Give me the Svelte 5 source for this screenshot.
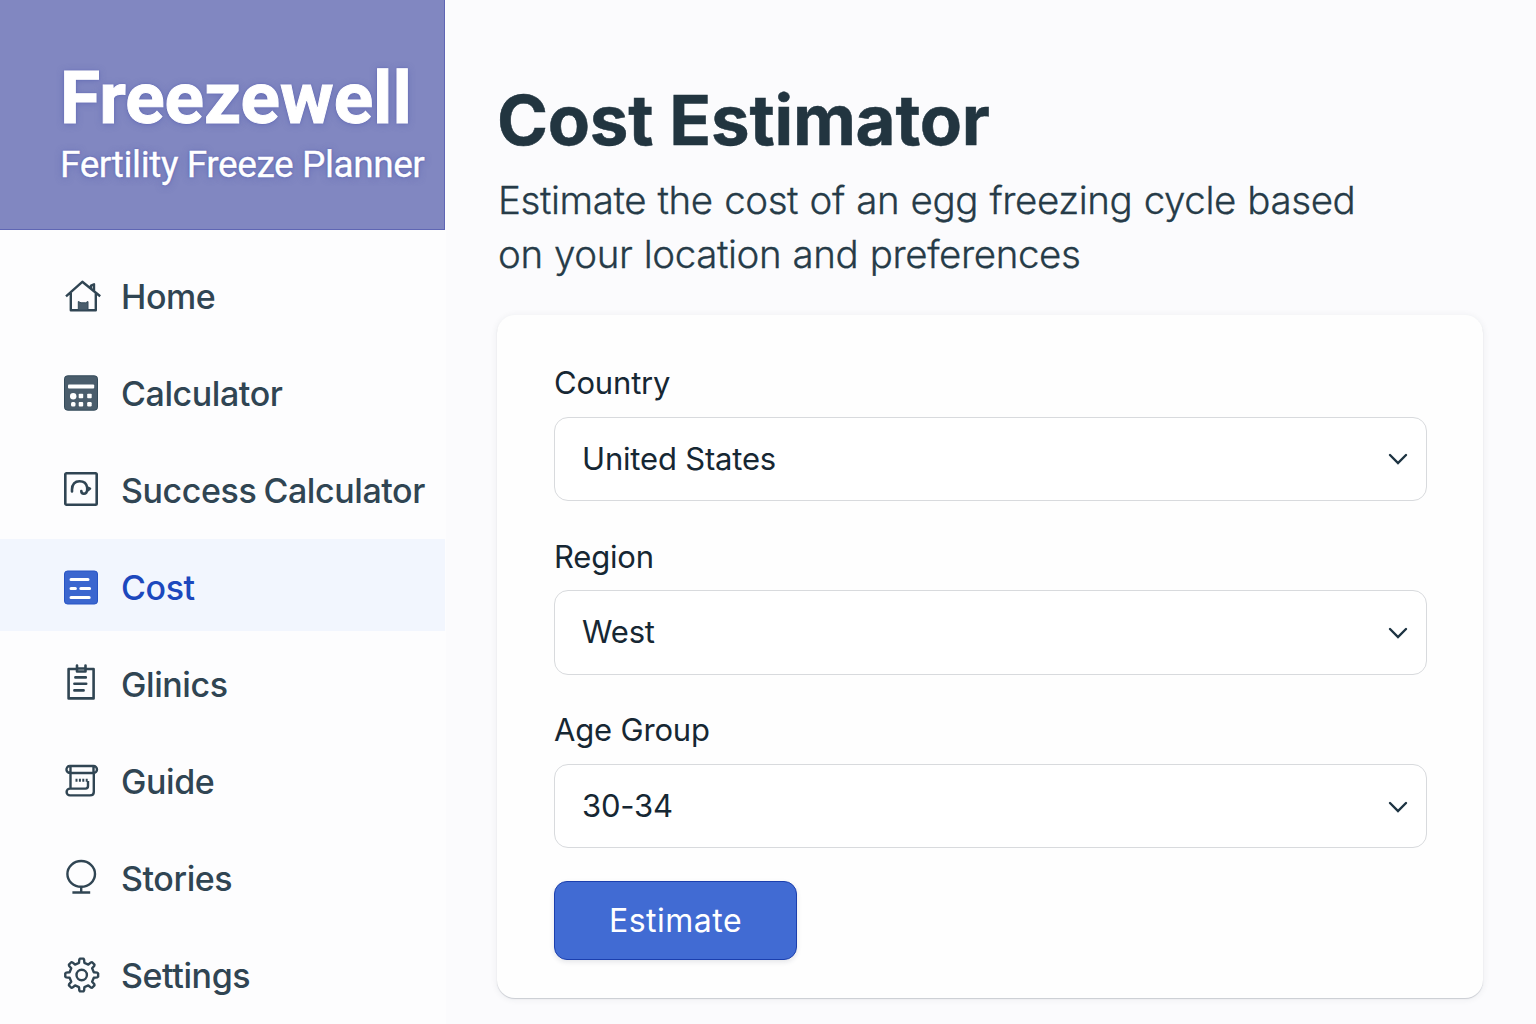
<script lang="ts">
  const navItems = [
    { id: 'home', label: 'Home' },
    { id: 'calculator', label: 'Calculator' },
    { id: 'success', label: 'Success Calculator' },
    { id: 'cost', label: 'Cost' },
    { id: 'clinics', label: 'Glinics' },
    { id: 'guide', label: 'Guide' },
    { id: 'stories', label: 'Stories' },
    { id: 'settings', label: 'Settings' }
  ];

  const fields = [
    { id: 'country', label: 'Country', value: 'United States' },
    { id: 'region', label: 'Region', value: 'West' },
    { id: 'age', label: 'Age Group', value: '30-34' }
  ];

  let active = $state('cost');

  // eight-toothed cog, centred on 0,0
  function cog(outer: number, root: number) {
    const points: string[] = [];
    for (let i = 0; i < 8; i++) {
      const mid = (i * Math.PI) / 4;
      for (const [offset, r] of [[-0.22, root], [-0.15, outer - 0.8], [-0.1, outer], [0.1, outer], [0.15, outer - 0.8], [0.22, root]]) {
        points.push(`${(r * Math.sin(mid + offset)).toFixed(2)} ${(-r * Math.cos(mid + offset)).toFixed(2)}`);
      }
    }
    return `M${points.join('L')}Z`;
  }
</script>

<div class="app">
  <aside class="sidebar">
    <header class="brand">
      <div class="name">Freezewell</div>
      <div class="tagline">Fertility Freeze Planner</div>
    </header>
    <nav>
      {#each navItems as item}
        <button class="nav-item" class:active={active === item.id} onclick={() => (active = item.id)}>
          <svg class="icon" viewBox="0 0 40 40" aria-hidden="true">
            {#if item.id === 'home'}
              <path d="M4 20.3 20.3 5.8 38.2 20.3M8.8 17V34.3H33.8V17M29 12V9.5L32 8.3V15" />
              <path class="solid" d="M16.3 34V25.5L19 26.8H23.5L26 25.5V34Z" />
            {:else if item.id === 'calculator'}
              <rect class="solid" x="2.5" y="2.8" width="33" height="34.4" rx="3" />
              <rect class="hole" x="6" y="11.5" width="26.2" height="4" rx="1" />
              <circle class="hole" cx="11.2" cy="23.2" r="3.2" />
              <rect class="hole" x="16.7" y="20.8" width="4.5" height="4.5" rx="0.8" />
              <rect class="hole" x="25.2" y="20.8" width="4.5" height="4.5" rx="0.8" />
              <rect class="hole" x="9" y="29" width="4.5" height="4.5" rx="1.5" />
              <rect class="hole" x="16.7" y="29" width="4.5" height="4.5" rx="1" />
              <rect class="hole" x="25.2" y="29" width="4.5" height="4.5" rx="1.2" />
            {:else if item.id === 'success'}
              <rect class="bold" x="3.3" y="3.3" width="31.4" height="31.4" rx="1.2" />
              <path class="bold" d="M10 21.5V19.5C10 14 13 11.2 17.5 11.2C21.5 11.2 24.6 13.6 25.2 17.5L28 18.6L25 21C24.2 24.8 19.3 24.4 19.3 21M25.2 17.5V21" />
            {:else if item.id === 'cost'}
              <rect class="solid" x="2.5" y="4" width="33" height="33" rx="3" />
              <path class="bars" d="M9 12.4H26M9 21.5H13.4M18.8 21.5H27.6M9 30.4H27.2" />
            {:else if item.id === 'clinics'}
              <path class="bold" d="M14 5H6.6V34.4H31.6V5H24.5M15 1.5V7.5H23.5V1.5M15.5 4.5H23" />
              <path class="bold" d="M13.4 13.4H23.8M12.4 19.8H24.2M12.4 26.4H21.6" />
            {:else if item.id === 'guide'}
              <path d="M7.5 5H31.5A3.4 3.4 0 0 1 31.5 12M7.5 5A3.4 3.4 0 1 0 8.5 12V27.5M8.5 5.2V12H31.5V5.2M31.8 12V31Q31.8 34.4 28 34.4H8A3.4 3.4 0 0 1 8 27.6H23.5Q26 27.6 26 25V20" />
              <path class="ticks" d="M13.5 19.3H26" />
            {:else if item.id === 'stories'}
              <ellipse cx="19.2" cy="15.9" rx="13.8" ry="12.9" />
              <path d="M19.2 28.8V34.5M10.4 34.5H28.2" />
            {:else}
              <g transform="translate(19.7 20)">
                <path d={cog(16.5, 12.4)} />
                <circle r="5.2" />
              </g>
            {/if}
          </svg>
          <span class="nav-label">{item.label}</span>
        </button>
      {/each}
    </nav>
  </aside>

  <main>
    <h1>Cost Estimator</h1>
    <p class="intro">Estimate the cost of an egg freezing cycle based<br />on your location and preferences</p>

    <section class="card">
      {#each fields as field}
        <div class="field">
          <span class="field-label">{field.label}</span>
          <button class="select" aria-label={field.label}>
            <span class="value">{field.value}</span>
            <svg class="chevron" viewBox="0 0 20 12" aria-hidden="true">
              <path d="M2 2 10 10 18 2" />
            </svg>
          </button>
        </div>
      {/each}
      <button class="submit">Estimate</button>
    </section>
  </main>
</div>

<style>
  :global(body) {
    margin: 0;
    background: #fbfbfd;
  }
  button {
    font: inherit;
    color: inherit;
    border: 0;
    border-radius: 0;
    text-align: left;
    cursor: pointer;
  }
  .app {
    display: flex;
    height: 1024px;
    overflow: hidden;
    font-family: Inter, 'Liberation Sans', sans-serif;
    color: #263b48;
  }
  .sidebar {
    width: 446px;
    flex: none;
    background: #fdfdfe;
  }
  .brand {
    box-sizing: border-box;
    width: 445px;
    height: 230px;
    padding: 54px 0 0 60px;
    background: #8187c1;
    border-right: 1px solid #5f66b4;
    border-bottom: 1px solid #5f66b4;
    color: #fff;
    font-family: Roboto, 'Liberation Sans', sans-serif;
    white-space: nowrap;
    text-shadow: 0 0 2px #4c55ac, 0 1px 7px rgba(76, 85, 172, 0.5);
  }
  .name {
    font-size: 73px;
    line-height: 88px;
    font-weight: 700;
    letter-spacing: 0;
    -webkit-text-stroke: 1px #fff;
  }
  .tagline {
    font-size: 37px;
    line-height: 46px;
    letter-spacing: -0.43px;
    -webkit-text-stroke: 0.3px #fff;
  }
  nav {
    display: flex;
    flex-direction: column;
    gap: 5px;
    padding-top: 18px;
  }
  .nav-item {
    display: flex;
    align-items: center;
    gap: 19px;
    height: 92px;
    box-sizing: border-box;
    padding: 22px 0 18px 62px;
    background: none;
    color: #304553;
    white-space: nowrap;
  }
  .nav-item.active {
    width: 445px;
    background: #f2f6fe;
    color: #1c48bd;
  }
  .nav-label {
    font-size: 34px;
    font-weight: 500;
    letter-spacing: -0.42px;
    word-spacing: -1.5px;
  }
  .icon {
    width: 40px;
    height: 40px;
    flex: none;
    fill: none;
    stroke: currentColor;
    stroke-width: 2.4;
    stroke-linejoin: round;
  }
  .icon .solid {
    fill: #4a5d6c;
    stroke: #344b5a;
    stroke-width: 1;
  }
  .active .icon .solid {
    fill: #3b66cf;
    stroke: #2854c4;
  }
  .icon .hole {
    fill: #fff;
    stroke: none;
  }
  .icon .bold {
    stroke-width: 2.6;
    stroke-linecap: round;
  }
  .icon .bars {
    stroke: #fff;
    stroke-width: 3;
    stroke-linecap: round;
  }
  .icon .ticks {
    stroke-width: 3;
    stroke-dasharray: 2 1.4;
  }
  main {
    flex: 1;
    padding: 78px 53px 0 51px;
  }
  h1 {
    margin: 0;
    color: #223540;
    font-size: 69px;
    line-height: 84px;
    font-weight: 700;
    letter-spacing: -0.25px;
    -webkit-text-stroke: 0.5px #223540;
  }
  .intro {
    margin: 11px 0 0 1px;
    font-size: 38.5px;
    line-height: 54px;
    font-weight: 300;
    letter-spacing: -0.42px;
    word-spacing: 1px;
    white-space: nowrap;
    -webkit-text-stroke: 0.3px #263b48;
  }
  .card {
    box-sizing: border-box;
    height: 683px;
    margin-top: 34px;
    padding: 45px 56px 0 57px;
    background: #fefefe;
    border-radius: 18px;
    box-shadow: 0 1px 1px #c9ccd2, 0 1px 7px rgba(40, 50, 70, 0.08);
  }
  .field {
    display: flex;
    flex-direction: column;
    height: 173.7px;
    color: #162733;
    font-size: 31px;
    letter-spacing: -0.18px;
  }
  .field-label {
    height: 56.5px;
    line-height: 45px;
  }
  .select {
    box-sizing: border-box;
    display: flex;
    align-items: center;
    justify-content: space-between;
    height: 84.5px;
    padding: 0 18px 0 27px;
    background: #fff;
    border: 1px solid #d8dadd;
    border-radius: 14px;
    letter-spacing: inherit;
  }
  .value {
    padding-bottom: 1px;
  }
  .chevron {
    width: 20px;
    height: 12px;
    margin-top: 1px;
    fill: none;
    stroke: #1d3342;
    stroke-width: 2.4;
    stroke-linecap: round;
  }
  .submit {
    box-sizing: border-box;
    width: 243px;
    height: 79px;
    background: #416bd3;
    border: 1px solid #1b3fae;
    border-radius: 13px;
    color: #fff;
    font-size: 32px;
    letter-spacing: 0.5px;
    text-align: center;
    box-shadow: 0 2px 5px rgba(40, 50, 80, 0.12);
  }
</style>
